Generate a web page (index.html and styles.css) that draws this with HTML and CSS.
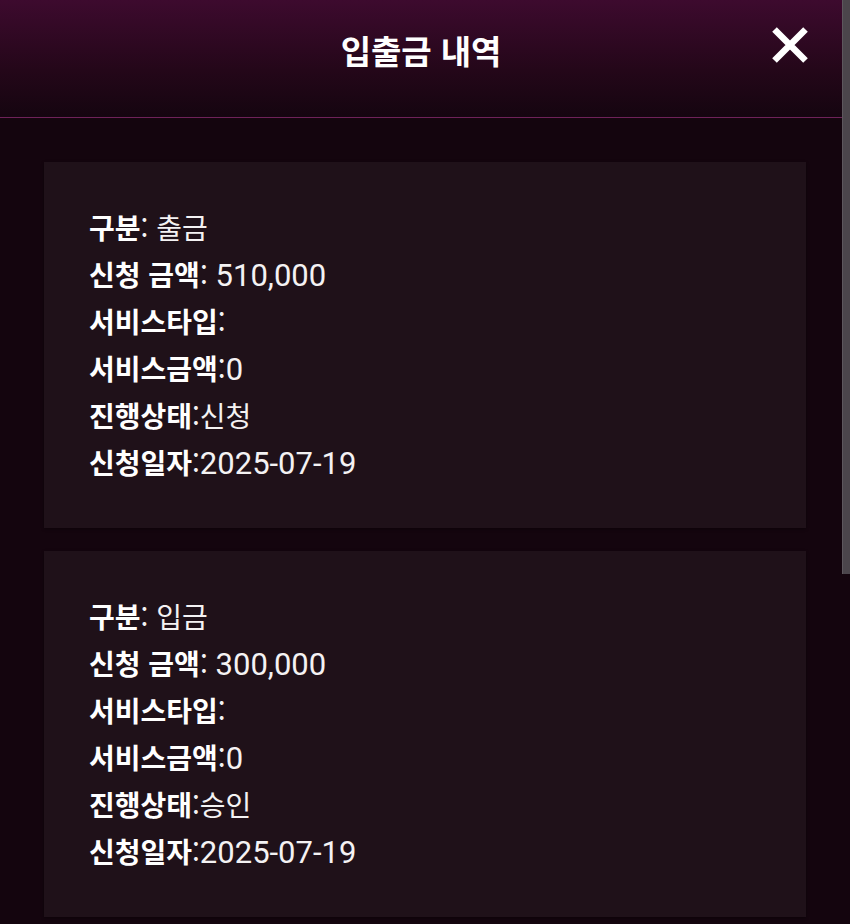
FILE: index.html
```html
<!DOCTYPE html>
<html lang="ko">
<head>
<meta charset="utf-8">
<title>입출금 내역</title>
<link rel="stylesheet" href="styles.css">
</head>
<body>
<div class="page">
  <header class="topbar">
    <h1 class="title">입출금 내역</h1>
    <button class="close" aria-label="닫기">
      <svg viewBox="0 0 40 40" width="40" height="40"><path d="M4.5 4.5 L35.5 35.5 M35.5 4.5 L4.5 35.5" stroke="#fff" stroke-width="6.5" stroke-linecap="butt"/></svg>
    </button>
  </header>
  <main class="list">
    <section class="card">
      <p class="row"><b>구분</b>: 출금</p>
      <p class="row"><b>신청 금액</b>: <span class="num">510,000</span></p>
      <p class="row"><b>서비스타입</b>:</p>
      <p class="row"><b>서비스금액</b>:<span class="num">0</span></p>
      <p class="row"><b>진행상태</b>:신청</p>
      <p class="row"><b>신청일자</b>:<span class="num">2025-07-19</span></p>
    </section>
    <section class="card">
      <p class="row"><b>구분</b>: 입금</p>
      <p class="row"><b>신청 금액</b>: <span class="num">300,000</span></p>
      <p class="row"><b>서비스타입</b>:</p>
      <p class="row"><b>서비스금액</b>:<span class="num">0</span></p>
      <p class="row"><b>진행상태</b>:승인</p>
      <p class="row"><b>신청일자</b>:<span class="num">2025-07-19</span></p>
    </section>
  </main>
</div>
<div class="scrollbar"><div class="thumb"></div></div>
</body>
</html>
```
FILE: styles.css
```css
html, body {
  margin: 0;
  padding: 0;
  background: #14050e;
  height: 924px;
  overflow: hidden;
}
body {
  font-family: "Noto Sans CJK KR", Roboto, sans-serif;
  color: #fff;
}
.page {
  margin-right: 8px;
}
.topbar {
  position: relative;
  height: 117px;
  border-bottom: 1px solid #6e2259;
  background: linear-gradient(to bottom, #3d0a2e 0%, #240719 60%, #150510 100%);
  display: flex;
  align-items: center;
  justify-content: center;
}
.title {
  margin: 0;
  margin-top: -18px;
  font-size: 33px;
  font-weight: 700;
  letter-spacing: -0.1px;
  color: #fff;
}
.close {
  position: absolute;
  right: 32px;
  top: 25px;
  width: 40px;
  height: 40px;
  padding: 0;
  border: 0;
  background: none;
  display: flex;
}
.list {
  padding: 44px 36px 0 44px;
  display: flex;
  flex-direction: column;
  gap: 23px;
}
.card {
  background: #1f1119;
  padding: 42px 45px 42px;
  box-shadow: 0 1px 3px rgba(0,0,0,0.4);
}
.row {
  margin: 0;
  font-size: 28px;
  line-height: 47px;
  height: 47px;
  font-weight: 400;
  color: #f4f2f3;
  white-space: nowrap;
}
.row b {
  font-weight: 700;
  color: #fff;
}
.num {
  font-family: Roboto, "Noto Sans CJK KR", sans-serif;
  font-size: 31px;
}
.scrollbar {
  position: fixed;
  top: 0;
  right: 0;
  width: 8px;
  height: 924px;
  background: #14050e;
}
.thumb {
  height: 574px;
  background: #4b454b;
  border-left: 1px solid #5d575d;
  box-sizing: border-box;
}
```
